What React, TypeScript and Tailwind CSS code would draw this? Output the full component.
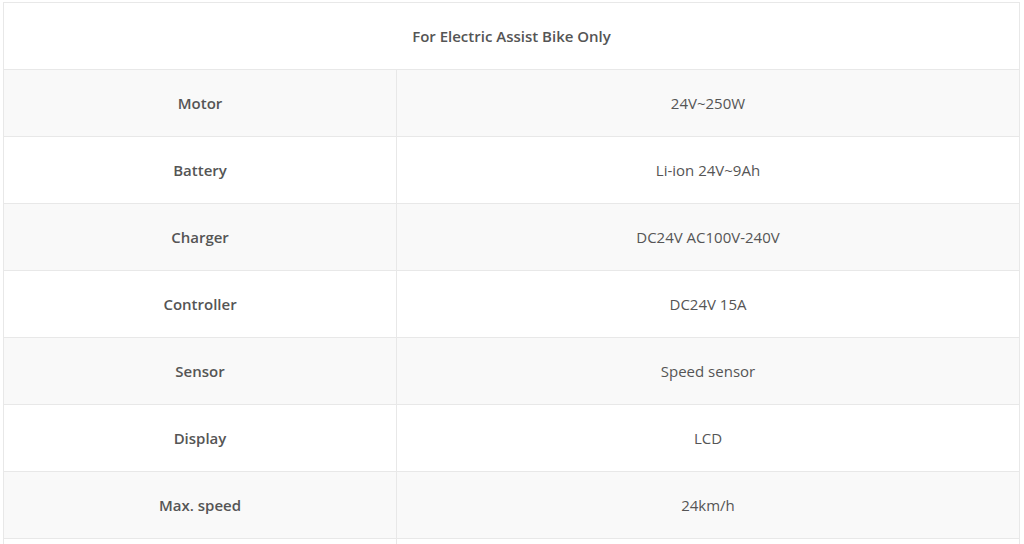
const rows: [string, string][] = [
  ["Motor", "24V~250W"],
  ["Battery", "Li-ion 24V~9Ah"],
  ["Charger", "DC24V AC100V-240V"],
  ["Controller", "DC24V 15A"],
  ["Sensor", "Speed sensor"],
  ["Display", "LCD"],
  ["Max. speed", "24km/h"],
  ["", ""],
];

export default function App() {
  return (
    <div className="h-[544px] w-[1024px] overflow-hidden bg-white pl-[3px] pt-[2px] font-['Open_Sans',sans-serif] text-[15px] text-[#555]">
      <table className="w-[1017px] table-fixed border-collapse">
        <colgroup>
          <col className="w-[393px]" />
          <col />
        </colgroup>
        <tbody>
          <tr className="bg-white">
            <td colSpan={2} className="h-[67px] border border-[#e8e8e8] pt-[1px] text-center font-semibold">
              For Electric Assist Bike Only
            </td>
          </tr>
          {rows.map(([label, value], i) => (
            <tr key={i} className={i % 2 === 0 ? "bg-[#f9f9f9]" : "bg-white"}>
              <td className="h-[67px] border border-[#e8e8e8] pt-[1px] text-center font-semibold">{label}</td>
              <td className="h-[67px] border border-[#e8e8e8] pt-[1px] text-center">{value}</td>
            </tr>
          ))}
        </tbody>
      </table>
    </div>
  );
}
